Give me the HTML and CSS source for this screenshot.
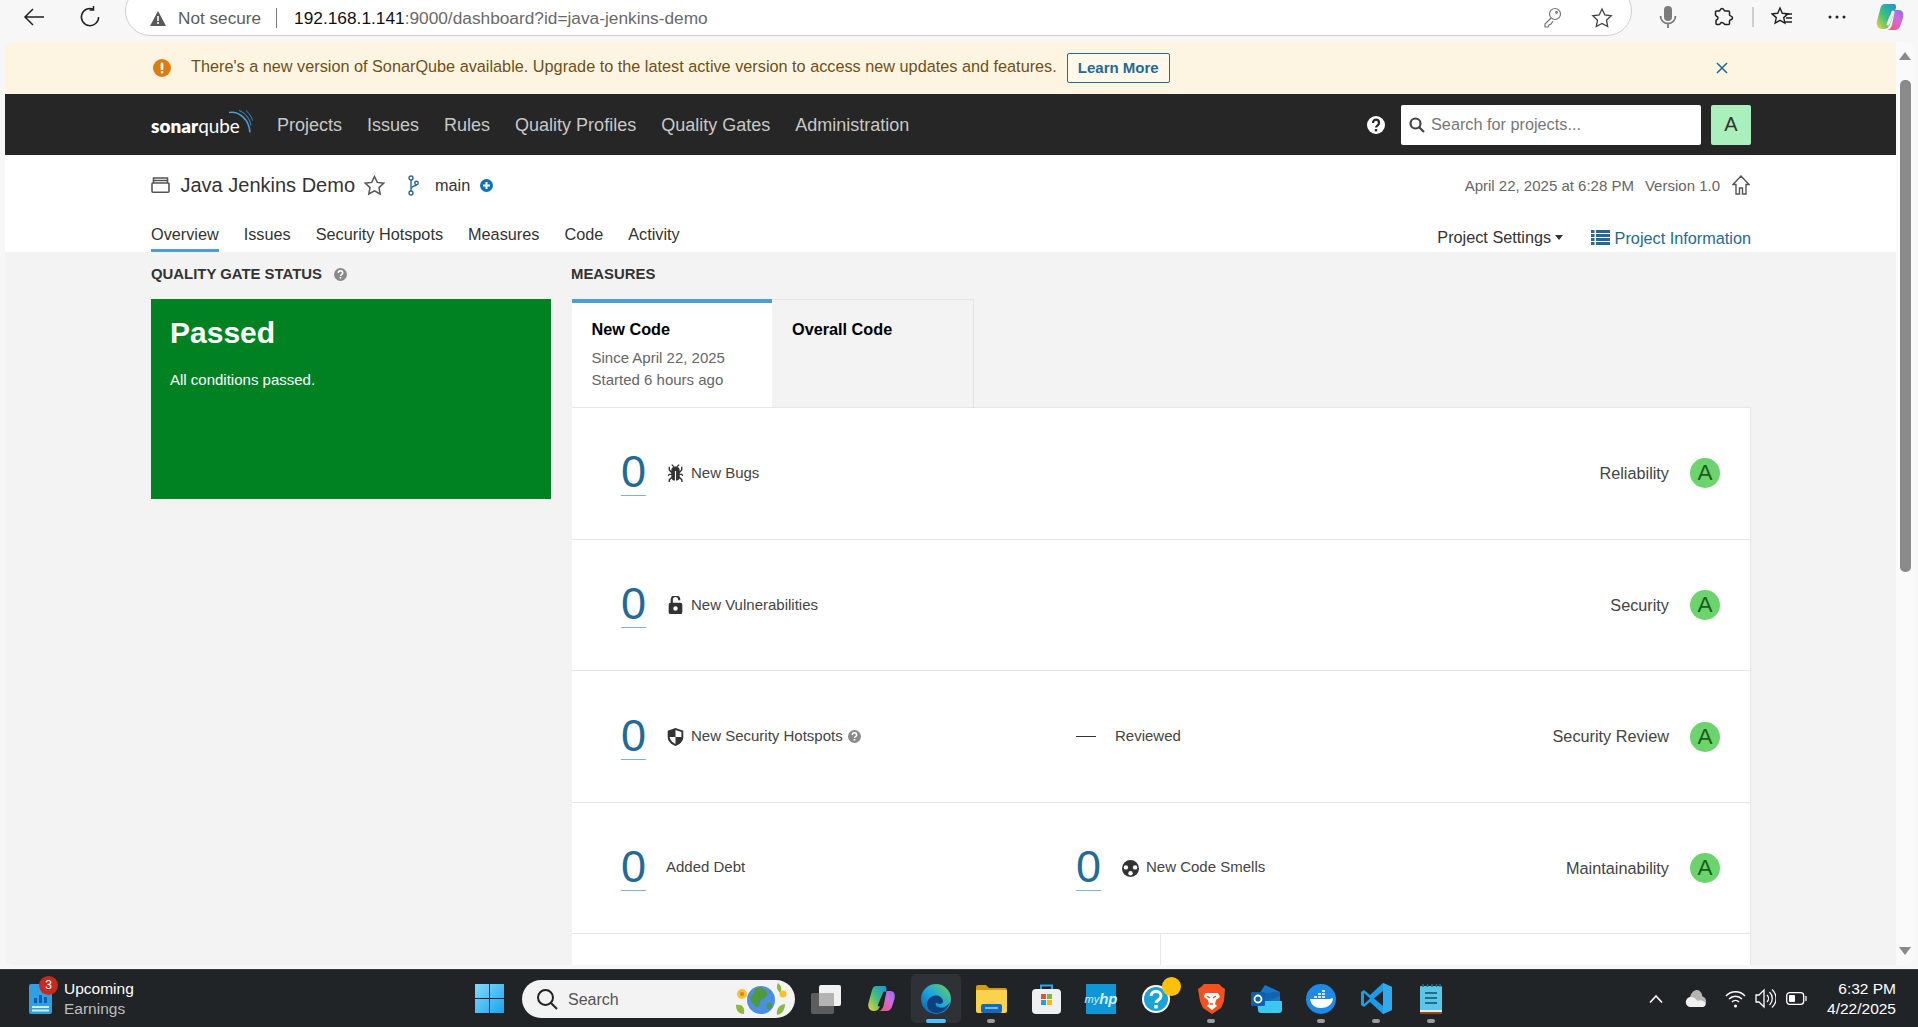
FILE: index.html
```html
<!DOCTYPE html>
<html lang="en">
<head>
<meta charset="utf-8">
<title>Java Jenkins Demo - SonarQube</title>
<link rel="stylesheet" href="styles.css">
</head>
<body>
<div class="screen">
  <header class="toolbar">
    <div class="tb-btn tb-first"><svg width="22" height="22" viewBox="0 0 22 22" fill="none" stroke="#222" stroke-width="1.5"><path d="M21 11H2M10 3l-8 8 8 8"/></svg></div>
    <div class="tb-btn"><svg width="22" height="22" viewBox="0 0 22 22" fill="none" stroke="#222" stroke-width="1.5"><path d="M14.5 3.2A8.6 8.6 0 1 0 19.6 11"/><path d="M14.5 0v4h-4"/></svg></div>
    <div class="addr">
      <svg class="warn-tri" width="16" height="15" viewBox="0 0 16 15"><path d="M8 0l8 15H0z" fill="#5a5a5a"/><path d="M7.2 5h1.6v5H7.2zM7.2 11h1.6v2H7.2z" fill="#fff"/></svg>
      <span class="not-secure">Not secure</span>
      <span class="addr-sep"></span>
      <span class="url"><b>192.168.1.141</b>:9000/dashboard?id=java-jenkins-demo</span>
      <svg class="addr-key" width="20" height="22" viewBox="0 0 20 22" fill="none" stroke="#777" stroke-width="1.2"><circle cx="13" cy="7" r="5.5"/><path d="M9 11l-6 6v3h3l1-2 2-1 2-3"/><circle cx="14.5" cy="5.5" r=".8"/></svg>
      <svg class="addr-star" width="22" height="22" viewBox="0 0 22 22" fill="none" stroke="#444" stroke-width="1.3"><path d="M11 2l2.8 6 6.4.8-4.7 4.4 1.2 6.4L11 16.400l-5.700 3.200 1.200-6.400L1.800 8.800 8.200 8z"/></svg>
    </div>
    <div class="tb-btn tb-mic"><svg width="18" height="24" viewBox="0 0 18 24" fill="none"><rect x="5" y="1" width="8" height="15" rx="4" fill="#7b7b7b"/><path d="M1.500 11a7.500 7.500 0 0 0 15 0M9 18.500V23" stroke="#7b7b7b" stroke-width="1.800"/></svg></div>
    <div class="tb-btn"><svg width="20" height="20" viewBox="0 0 20 20" fill="none" stroke="#222" stroke-width="1.500"><path d="M8 1.500c2 0 2 2.500 3 2.500h3.500a1 1 0 0 1 1 1V8c0 1 3 1 3 3s-3 1.500-3 3v2.500a1 1 0 0 1-1 1H11c-1 0-1-2-3-2s-1.500 2-3 2H3a1 1 0 0 1-1-1V14c0-1.500 2-1 2-3s-2.500-1.500-2.500-3V5a1 1 0 0 1 1-1H5c1.500 0 1-2.500 3-2.500z"/></svg></div>
    <span class="tb-sep"></span>
    <div class="tb-btn"><svg width="22" height="22" viewBox="0 0 22 22" fill="none" stroke="#222" stroke-width="1.400"><path d="M9 2l2.300 5.300 5.700.6-4.300 3.700 1.200 5.600L9 14.400 4.100 17.200l1.200-5.600L1 7.900l5.700-.6z"/><path d="M14 8h7M15 12h6M14 16h7"/></svg></div>
    <div class="tb-btn tb-more"><svg width="18" height="4" viewBox="0 0 18 4" fill="#222"><circle cx="2" cy="2" r="1.500"/><circle cx="9" cy="2" r="1.500"/><circle cx="16" cy="2" r="1.500"/></svg></div>
    <div class="tb-btn tb-copilot"><svg width="28" height="28" viewBox="0 0 28 28"><defs><linearGradient id="cp1" x1="0" y1="1" x2="1" y2="0"><stop offset="0" stop-color="#f7d038"/><stop offset=".45" stop-color="#39c37c"/><stop offset="1" stop-color="#1d8fe8"/></linearGradient><linearGradient id="cp2" x1="0" y1="1" x2="1" y2="0"><stop offset="0" stop-color="#f0556a"/><stop offset=".6" stop-color="#d06be0"/><stop offset="1" stop-color="#8f6bef"/></linearGradient></defs><path d="M9 1h9c2 0 2 2 2 4l-6 16c-1 3-3 5-6 5H6c-4 0-6-4-5-8L4 7C5 3 6 1 9 1z" fill="url(#cp1)"/><path d="M19 7h4c4 0 5 4 4 8l-2 6c-1 4-3 6-6 6h-8c2 0 4-2 5-5z" fill="url(#cp2)"/><path d="M17 9l-5 12" stroke="#f7f7f7" stroke-width="3" stroke-linecap="round"/></svg></div>
  </header>

  <div class="window">
    <main class="page">
      <section class="banner">
        <svg class="banner-ico" width="18" height="18" viewBox="0 0 18 18"><circle cx="9" cy="9" r="9" fill="#e07b10"/><rect x="7.700" y="3.500" width="2.600" height="7.500" rx="1" fill="#fff"/><rect x="7.700" y="12" width="2.600" height="2.600" rx="1" fill="#fff"/></svg>
        <span class="banner-text">There's a new version of SonarQube available. Upgrade to the latest active version to access new updates and features.</span>
        <a class="learn">Learn More</a>
        <svg class="banner-x" width="12" height="12" viewBox="0 0 12 12" fill="none" stroke="#236a97" stroke-width="1.600"><path d="M1 1l10 10M11 1L1 11"/></svg>
      </section>

      <nav class="nav">
        <div class="logo">
          <span class="logo-text"><b>sonar</b>qube</span>
          <svg class="logo-arc" width="24" height="24" viewBox="0 0 24 24" fill="none"><path d="M0 2.500C10 1 20 9 21 22.500" stroke="#4b9fd5" stroke-width="1.600"/><path d="M10 .5c7 2.500 11 9 12 15" stroke="#4b9fd5" stroke-width=".9"/><path d="M17 .5c3 2.500 5.500 6 6.500 10" stroke="#4b9fd5" stroke-width=".8"/></svg>
        </div>
        <a class="nav-link">Projects</a>
        <a class="nav-link">Issues</a>
        <a class="nav-link">Rules</a>
        <a class="nav-link">Quality Profiles</a>
        <a class="nav-link">Quality Gates</a>
        <a class="nav-link">Administration</a>
        <svg class="nav-help" width="18" height="18" viewBox="0 0 18 18"><circle cx="9" cy="9" r="9" fill="#fff"/><path d="M6 7c0-4.500 6-4.500 6 0 0 2.500-3 2.500-3 4.500" fill="none" stroke="#262626" stroke-width="2.200"/><rect x="7.800" y="13" width="2.400" height="2.400" fill="#262626"/></svg>
        <div class="search">
          <svg width="16" height="16" viewBox="0 0 16 16" fill="none" stroke="#444" stroke-width="2.200"><circle cx="6.500" cy="6.500" r="5"/><path d="M10 10l5 5"/></svg>
          <span>Search for projects...</span>
        </div>
        <div class="avatar">A</div>
      </nav>

      <section class="project">
        <div class="project-top">
          <svg class="qual-ico" width="19" height="16" viewBox="0 0 19 16" fill="none" stroke="#555" stroke-width="1.600"><rect x="1" y="6" width="17" height="9.200" rx="1"/><path d="M2.500 6V1h14v5M2.500 3.500h14"/></svg>
          <span class="project-name">Java Jenkins Demo</span>
          <svg class="project-star" width="21" height="21" viewBox="0 0 21 21" fill="none" stroke="#555" stroke-width="1.500"><path d="M10.500 1.500l2.800 5.900 6.400.8-4.700 4.400 1.200 6.400-5.700-3.100-5.700 3.100 1.200-6.400L1.300 8.200l6.400-.8z"/></svg>
          <svg class="branch-ico" width="11" height="21" viewBox="0 0 11 21" fill="none" stroke="#236a97" stroke-width="1.400"><circle cx="3" cy="3" r="2"/><circle cx="3" cy="18" r="2"/><circle cx="8.500" cy="8" r="1.700"/><path d="M3 5v11M3 14c0-3 5-2.500 5.500-4.500"/></svg>
          <span class="branch-name">main</span>
          <svg class="branch-plus" width="13" height="13" viewBox="0 0 13 13"><circle cx="6.500" cy="6.500" r="6.500" fill="#0f72b8"/><path d="M6.500 3v7M3 6.500h7" stroke="#fff" stroke-width="2"/></svg>
          <span class="analysis">April 22, 2025 at 6:28 PM</span>
          <span class="version">Version 1.0</span>
          <svg class="home-ico" width="18" height="20" viewBox="0 0 18 20" fill="none" stroke="#555" stroke-width="1.400"><path d="M9 1L1 9.500h3V19h3.500v-6h3v6H14V9.500h3z"/></svg>
        </div>
        <div class="project-tabs">
          <a class="ptab ptab-on">Overview</a>
          <a class="ptab">Issues</a>
          <a class="ptab">Security Hotspots</a>
          <a class="ptab">Measures</a>
          <a class="ptab">Code</a>
          <a class="ptab">Activity</a>
          <span class="settings">Project Settings</span>
          <span class="caret"></span>
          <svg class="info-ico" width="19" height="15" viewBox="0 0 19 15" fill="#236a97"><path d="M0 0h3.500v3H0zM5 0h14v3H5zM0 4h3.500v3H0zM5 4h14v3H5zM0 8h3.500v3H0zM5 8h14v3H5zM0 12h3.500v3H0zM5 12h14v3H5z"/></svg>
          <span class="info-text">Project Information</span>
        </div>
      </section>

      <div class="content">
        <aside class="gate">
          <h2 class="label">Quality Gate Status
            <svg class="help-ico" width="13" height="13" viewBox="0 0 13 13"><circle cx="6.500" cy="6.500" r="6.500" fill="#8a8a8a"/><path d="M4.300 5c0-3 4.400-3 4.400 0 0 1.700-2.200 1.700-2.200 3" fill="none" stroke="#fff" stroke-width="1.500"/><rect x="5.700" y="9" width="1.600" height="1.600" fill="#fff"/></svg>
          </h2>
          <div class="gate-box">
            <div class="gate-title">Passed</div>
            <div class="gate-msg">All conditions passed.</div>
          </div>
        </aside>
        <section class="measures">
          <h2 class="label">Measures</h2>
          <div class="code-tabs">
            <div class="code-tab code-tab-on">
              <div class="code-title">New Code</div>
              <div class="code-sub code-sub-first">Since April 22, 2025</div>
              <div class="code-sub">Started 6 hours ago</div>
            </div>
            <div class="code-tab">
              <div class="code-title">Overall Code</div>
            </div>
          </div>
          <div class="panel">
            <div class="row row-1">
              <div class="col1">
                <a class="num">0</a>
                <svg class="m-ico" width="17" height="18" viewBox="2.300 1 11.400 13" fill="#333"><path d="M11 9h1.300l.5.8.8-.5-.8-1.300H11v-.3l2-2.300V3h-1v2l-1 1.200V5c-.1-.8-.7-1.500-1.400-1.900L11 1.800l-.7-.7-1.800 1.800a2.500 2.500 0 0 0-1.100 0L5.700 1.100l-.7.7 1.400 1.300C5.700 3.500 5.100 4.200 5 5v1.100L4 5V3H3v2.300l2 2.300V8H3.200l-.8 1.300.8.5.5-.8H5v1.200l-2 2V14h1v-1.300l1.100-1.200c.3.900 1.200 1.500 2.300 1.500h.2V6h.8v7h.2c1.100 0 2-.6 2.400-1.500l1.100 1.200V14h1v-1.800l-2-2z"/></svg>
                <span class="m-label">New Bugs</span>
              </div>
              <span class="r-label">Reliability</span>
              <span class="rating">A</span>
            </div>
            <div class="row row-2">
              <div class="col1">
                <a class="num">0</a>
                <svg class="m-ico" width="17" height="18" viewBox="2.500 1 11 14.500" fill="#333"><path d="M5 7V4a3 3 0 0 1 6 0v.5" fill="none" stroke="#333" stroke-width="1.800"/><path fill-rule="evenodd" d="M4 6.500h8a1.500 1.500 0 0 1 1.500 1.500v6a1.500 1.500 0 0 1-1.500 1.500H4A1.500 1.500 0 0 1 2.500 14V8A1.500 1.500 0 0 1 4 6.500zM8 9.200a1.800 1.800 0 1 0 0 3.600 1.800 1.800 0 0 0 0-3.600z"/></svg>
                <span class="m-label">New Vulnerabilities</span>
              </div>
              <span class="r-label r-label-low">Security</span>
              <span class="rating">A</span>
            </div>
            <div class="row row-3">
              <div class="col1">
                <a class="num">0</a>
                <svg class="m-ico" width="17" height="18" viewBox="1.500 .5 13 15"><path d="M8 .5l6.500 2.200V8c0 3.500-3 6.300-6.500 7.500C4.500 14.300 1.500 11.500 1.500 8V2.700z" fill="#333"/><path d="M8 2.200l4.900 1.600V8H8zM8 8v5.800C5.600 12.800 3.500 10.700 3.100 8z" fill="#fff"/></svg>
                <span class="m-label">New Security Hotspots</span>
                <svg class="help-ico" width="13" height="13" viewBox="0 0 13 13"><circle cx="6.500" cy="6.500" r="6.500" fill="#8a8a8a"/><path d="M4.300 5c0-3 4.400-3 4.400 0 0 1.700-2.200 1.700-2.200 3" fill="none" stroke="#fff" stroke-width="1.500"/><rect x="5.700" y="9" width="1.600" height="1.600" fill="#fff"/></svg>
              </div>
              <div class="col2"><span class="dash"></span><span class="m-label reviewed">Reviewed</span></div>
              <span class="r-label">Security Review</span>
              <span class="rating">A</span>
            </div>
            <div class="row row-4">
              <div class="col1">
                <a class="num">0</a>
                <span class="m-label debt">Added Debt</span>
              </div>
              <div class="col2">
                <a class="num">0</a>
                <svg class="m-ico" width="17" height="17" viewBox="0 0 17 17"><circle cx="8.500" cy="8.500" r="8.500" fill="#333"/><circle cx="3.900" cy="7.400" r="2.200" fill="#fff"/><circle cx="13.100" cy="7.400" r="2.200" fill="#fff"/><circle cx="8.500" cy="13.300" r="2.200" fill="#fff"/><circle cx="8.500" cy="8.800" r="1.600" fill="#333"/></svg>
                <span class="m-label">New Code Smells</span>
              </div>
              <span class="r-label">Maintainability</span>
              <span class="rating">A</span>
            </div>
            <div class="row-split"><div class="split-cell"></div><div class="split-rest"></div></div>
          </div>
        </section>
      </div>
    </main>
    <div class="scrollbar">
      <span class="sb-up"></span>
      <span class="sb-thumb"></span>
      <span class="sb-down"></span>
    </div>
  </div>

  <footer class="taskbar">
    <div class="widget">
      <div class="widget-ico">
        <svg width="23" height="30" viewBox="0 0 23 30"><rect width="23" height="30" rx="2" fill="#2f9fe6"/><path d="M5 14h3v5H5zM10 11h3v8h-3zM15 13h3v6h-3z" fill="#0c5fa8"/><path d="M3 22h17v2H3zM3 25.500h17v2H3z" fill="#d3ecfb"/></svg>
        <span class="badge">3</span>
      </div>
      <div class="widget-text"><div>Upcoming</div><div class="muted">Earnings</div></div>
    </div>
    <svg class="win" width="29" height="29" viewBox="0 0 29 29"><defs><linearGradient id="w1" x1="0" y1="0" x2="1" y2="1"><stop offset="0" stop-color="#7fdcfa"/><stop offset="1" stop-color="#1aa3ef"/></linearGradient></defs><path d="M0 0h14v14H0zM15 0h14v14H15zM0 15h14v14H0zM15 15h14v14H15z" fill="url(#w1)"/></svg>
    <div class="pill">
      <svg width="22" height="22" viewBox="0 0 22 22" fill="none" stroke="#222" stroke-width="2"><circle cx="9.500" cy="9.500" r="7.500"/><path d="M15 15l6 6"/></svg>
      <span class="pill-text">Search</span>
      <svg class="pill-globe" width="58" height="36" viewBox="0 0 58 36"><circle cx="10" cy="13" r="5" fill="#f5c32c"/><circle cx="10" cy="13" r="2" fill="#d9822b"/><path d="M4 24c6-1 9 2 8 9-5 0-8-3-8-9z" fill="#8fb93d"/><circle cx="29" cy="19" r="14" fill="#4a8fe0"/><path d="M24 7c6-2 12 2 11 7-1 4-6 2-7 7s-3 7-6 3-5-7-2-10 3-6 4-7zM36 22c3-1 5 0 4 3s-4 4-5 2 0-4 1-5z" fill="#4f9a3a"/><path d="M46 2c4 3 4 7 2 10-3-3-4-6-2-10z" fill="#8fb93d"/><circle cx="51" cy="13" r="3.500" fill="#f5c32c"/><path d="M45 34c-1-6 2-10 8-11 0 6-3 10-8 11z" fill="#8fb93d"/></svg>
    </div>
    <div class="task">
      <span class="task-btn"><svg width="30" height="30" viewBox="0 0 30 30"><rect x="0" y="9" width="23" height="21" rx="2" fill="#5d5d5d"/><rect x="8" y="1" width="22" height="21" rx="2" fill="#f1f1f1"/><rect x="8" y="9" width="15" height="13" fill="#b4b4b4"/></svg></span>
      <span class="task-btn"><svg width="29" height="27" viewBox="0 0 28 27"><defs><linearGradient id="tc1" x1="0" y1="1" x2="1" y2="0"><stop offset="0" stop-color="#f7d038"/><stop offset=".5" stop-color="#3bbf7c"/><stop offset="1" stop-color="#1d8fe8"/></linearGradient><linearGradient id="tc2" x1="0" y1="1" x2="1" y2="0"><stop offset="0" stop-color="#f0556a"/><stop offset=".6" stop-color="#d06be0"/><stop offset="1" stop-color="#8f6bef"/></linearGradient></defs><path d="M9 1h8c2 0 2 2 2 4l-6 15c-1 3-3 6-6 6H6c-4 0-6-4-5-8L4 7C5 3 6 1 9 1z" fill="url(#tc1)"/><path d="M19 6h4c4 0 5 4 4 8l-2 6c-1 4-3 6-6 6h-8c2 0 4-2 5-5z" fill="url(#tc2)"/><path d="M17 8l-5 12" stroke="#212427" stroke-width="3" stroke-linecap="round"/></svg></span>
      <span class="task-btn task-active"><svg width="30" height="30" viewBox="0 0 30 30"><defs><linearGradient id="e1" x1="0" y1="1" x2="1" y2="0"><stop offset="0" stop-color="#0c59a4"/><stop offset=".5" stop-color="#1ba6de"/><stop offset="1" stop-color="#6fd24d"/></linearGradient></defs><circle cx="15" cy="15" r="15" fill="url(#e1)"/><path d="M11 28C5 25 4 17 10 13c5-3 11-1 12 4 .6 3-4 4-6 2-2-1-2 3 1 4 4 2 9 0 12-5-2 8-10 13-18 10z" fill="#0f3f7f"/></svg><i class="dot dot-on"></i></span>
      <span class="task-btn"><svg width="31" height="28" viewBox="0 0 31 28"><path d="M0 2a2 2 0 0 1 2-2h8l3 3h16a2 2 0 0 1 2 2v5H0z" fill="#d39a12"/><path d="M0 5h31v21a2 2 0 0 1-2 2H2a2 2 0 0 1-2-2z" fill="#fbd24e"/><rect x="5" y="19" width="21" height="9" rx="2" fill="#0f6cbd"/><path d="M9 23h13" stroke="#a8d4f5" stroke-width="1.400"/></svg><i class="dot"></i></span>
      <span class="task-btn"><svg width="29" height="30" viewBox="0 0 29 30"><path d="M9 5V1.500h11V5" fill="none" stroke="#2aa5e0" stroke-width="2"/><rect y="5" width="29" height="25" rx="4" fill="#f0f0f0"/><path d="M9 10h5v5H9z" fill="#e6532d"/><path d="M15 10h5v5h-5z" fill="#7dba2f"/><path d="M9 16h5v5H9z" fill="#1ba1e2"/><path d="M15 16h5v5h-5z" fill="#fbb900"/></svg></span>
      <span class="task-btn"><span class="myhp">my<em>hp</em></span></span>
      <span class="task-btn task-help"><svg width="31" height="31" viewBox="0 0 31 31"><circle cx="15" cy="16" r="14" fill="#fff"/><circle cx="15" cy="16" r="12" fill="#1ba3d8"/><path d="M10 13c0-6 10-6 10 0 0 4-5 4-5 7" fill="none" stroke="#fff" stroke-width="3"/><rect x="13.300" y="22" width="3.400" height="3.400" fill="#fff"/></svg><i class="help-dot"></i></span>
      <span class="task-btn"><svg width="27" height="30" viewBox="0 0 27 30"><path d="M6 0h15l3 3 3 2-1 12-3 7-9 6-9-6-3-7L0 5l3-2z" fill="#f4511e"/><path d="M7 9h13l2 4-4 3-1 4 2 2-5 4-5-4 2-2-1-4-4-3z" fill="#fff"/><path d="M9 12l3 2M18 12l-3 2M12 20h3" stroke="#f4511e" stroke-width="1.500"/></svg><i class="dot"></i></span>
      <span class="task-btn"><svg width="31" height="28" viewBox="0 0 31 28"><path d="M14 0l15 7v14a3 3 0 0 1-3 3H8V9z" fill="#1477c9"/><path d="M11 8l18-1v4l-18 7z" fill="#0f5ea8" opacity=".7"/><path d="M6 16h25v9a3 3 0 0 1-3 3H10a3 3 0 0 1-3-3z" fill="#3cc7f0"/><rect y="7" width="14" height="14" rx="1.500" fill="#0a5fb0"/><circle cx="7" cy="14" r="3.500" fill="none" stroke="#fff" stroke-width="1.800"/></svg></span>
      <span class="task-btn"><svg width="30" height="30" viewBox="0 0 30 30"><circle cx="15" cy="15" r="15" fill="#1d8ae8"/><path d="M4 15h20c1-1 3-1 3 0-1 6-6 9-12 9-6 0-10-3-11-9z" fill="#fff"/><path d="M8 12h3v2H8zM12 12h3v2h-3zM16 12h3v2h-3zM12 9h3v2h-3zM16 9h3v2h-3zM16 6h3v2h-3z" fill="#cfe6fa"/></svg><i class="dot"></i></span>
      <span class="task-btn"><svg width="31" height="31" viewBox="0 0 31 31"><path d="M22 0l9 4v23l-9 4L9 19l-6 5-3-2v-13l3-2 6 5z" fill="#1c9be6"/><path d="M22 0v31l9-4V4z" fill="#2eaaf0"/><path d="M22 8l-9 7.500 9 7.500z" fill="#222528"/><path d="M3 10l6 5.500-6 5.500z" fill="#222528"/></svg><i class="dot"></i></span>
      <span class="task-btn"><svg width="22" height="30" viewBox="0 0 22 30"><rect y="2" width="22" height="28" rx="1" fill="#5cc6e8"/><path d="M0 26h22v2H0z" fill="#f2e7d5"/><path d="M0 28h22v2H0z" fill="#8b4d1f"/><path d="M5 9h12M5 14h12M5 19h12" stroke="#1f6e8c" stroke-width="2"/><path d="M3 0v3M7.500 0v3M12 0v3M16.500 0v3M20 0v3" stroke="#1f6e8c" stroke-width="1.500"/></svg><i class="dot"></i></span>
    </div>
    <div class="tray">
      <span class="tray-i tray-40"><svg width="14" height="8" viewBox="0 0 14 8" fill="none" stroke="#fff" stroke-width="1.600"><path d="M1 7.500L7 1l6 6.500"/></svg></span>
      <span class="tray-i tray-cloud"><svg width="22" height="20" viewBox="0 0 22 20"><path d="M6 18a5 5 0 0 1-1-9.800C6 3 9.500 1 12 1c3 0 5 3 5.500 6.500A5.500 5.500 0 0 1 17 18z" fill="#b4b4b4"/><path d="M6 18a5 5 0 0 1-.5-10c3 0 5 1.500 7 4 3-1.500 7-.5 8 3 .3 1.500-1 3-3 3z" fill="#f0f0f0"/></svg></span>
      <span class="tray-i tray-30"><svg width="21" height="21" viewBox="0 0 21 21" fill="none" stroke="#fff" stroke-width="1.500"><path d="M1 8a13 13 0 0 1 19 0M4 11a9 9 0 0 1 13 0M7 14a5 5 0 0 1 7 0"/><circle cx="10.500" cy="18" r="1.500" fill="#fff" stroke="none"/></svg></span>
      <span class="tray-i tray-30"><svg width="21" height="21" viewBox="0 0 21 21" fill="none" stroke="#fff" stroke-width="1.300"><path d="M1 7h3l5-5v17l-5-5H1zM12 7a5 5 0 0 1 0 7M14.500 4a9 9 0 0 1 0 13M17 1.500a12 12 0 0 1 0 18"/></svg></span>
      <span class="tray-i tray-bat"><svg width="21" height="13" viewBox="0 0 21 13" fill="none" stroke="#fff" stroke-width="1.300"><rect x=".7" y=".7" width="17" height="11.600" rx="3"/><rect x="3" y="3" width="6" height="7" rx="1" fill="#fff" stroke="none"/><path d="M20 4v5"/></svg></span>
      <div class="clock"><div>6:32 PM</div><div>4/22/2025</div></div>
    </div>
  </footer>
</div>
</body>
</html>
```
FILE: styles.css
```css
* { box-sizing: border-box; }
html, body { margin: 0; padding: 0; height: 100%; overflow: hidden; }
body { font-family: "Liberation Sans", Arial, sans-serif; color: #333; background: #f7f7f7; }
a { color: inherit; text-decoration: none; }
svg { display: block; flex: none; }
.screen { width: 1918px; height: 1027px; display: flex; flex-direction: column; overflow: hidden; }

/* browser toolbar */
.toolbar { height: 42px; flex: none; display: flex; align-items: flex-start; overflow: hidden; background: #f7f7f7; padding-left: 6px; }
.tb-btn { width: 56px; height: 34px; flex: none; display: flex; align-items: center; justify-content: center; }
.addr { width: 1507px; height: 50px; margin: -14px 0 0 7px; background: #fff; border: 1px solid #cfcfcf; border-radius: 25px; flex: none; display: flex; align-items: center; padding: 14px 18px 0 24px; }
.not-secure { font-size: 17.200px; color: #5c5c5c; margin-left: 12px; }
.addr-sep { width: 1px; height: 20px; background: #777; margin: 0 17px 0 15px; }
.url { font-size: 17.300px; color: #6a6a6a; white-space: nowrap; }
.url b { font-weight: 400; color: #111; }
.addr-key { margin-left: auto; }
.addr-star { margin-left: 29px; }
.tb-mic { margin-left: 8px; }
.tb-sep { width: 2px; height: 20px; background: #cfcfcf; margin: 7px 0 0; flex: none; }
.tb-more { width: 54px; }
.tb-copilot { width: 52px; }

/* window */
.window { height: 923px; flex: none; margin: 0 4px 0 5px; display: flex; overflow: hidden; border-radius: 8px; background: #fafafa; }
.page { width: 1891px; flex: none; display: flex; flex-direction: column; background: #f3f3f3; overflow: hidden; }
.scrollbar { flex: 1; display: flex; flex-direction: column; align-items: center; padding-top: 10px; background: #fafafa; }
.sb-up { width: 0; height: 0; border-left: 6px solid transparent; border-right: 6px solid transparent; border-bottom: 8px solid #8a8a8a; }
.sb-thumb { width: 11px; height: 492px; margin-top: 20px; border-radius: 5px; background: #8a8a8a; }
.sb-down { width: 0; height: 0; margin-top: auto; margin-bottom: 10px; border-left: 6px solid transparent; border-right: 6px solid transparent; border-top: 8px solid #8a8a8a; }

/* banner */
.banner { height: 52px; flex: none; display: flex; align-items: center; background: #fdf5e2; padding-left: 148px; }
.banner-text { font-size: 16.250px; color: #6f5018; margin-left: 20px; margin-top: -3px; white-space: nowrap; }
.learn { width: 103px; height: 30px; margin-left: 10px; margin-top: -1px; border: 1px solid #236a97; border-radius: 2px; background: #fff9ec; color: #236a97; font-size: 15px; font-weight: 700; display: flex; align-items: center; justify-content: center; }
.banner-x { margin-left: 546px; }

/* nav */
.nav { height: 61px; flex: none; display: flex; align-items: center; background: #262626; padding: 0 145px 0 146px; }
.logo { display: flex; align-items: flex-start; width: 102px; height: 26px; margin-right: 24px; }
.logo-text { font-family: Lato, "Open Sans", sans-serif; font-size: 18.900px; line-height: 28px; color: #fff; }
.logo-text b { font-weight: 800; }
.logo-arc { margin-left: -11px; margin-top: -2px; }
.nav-link { font-size: 18px; color: #c8c8c8; margin-right: 25px; white-space: nowrap; padding-top: 2px; }
.nav-help { margin-left: auto; margin-right: 16px; }
.search { width: 300px; height: 40px; background: #fff; border-radius: 2px; display: flex; align-items: center; padding-left: 8px; gap: 6px; color: #777; font-size: 16.250px; margin-right: 10px; }
.avatar { width: 40px; height: 40px; background: #aaf0bd; border-radius: 2px; color: #333; font-size: 20px; display: flex; align-items: center; justify-content: center; }

/* project */
.project { height: 97px; flex: none; background: #fff; padding: 0 145px 0 146px; display: flex; flex-direction: column; justify-content: space-between; }
.project-top { display: flex; align-items: center; height: 60px; padding-right: 1px; }
.project-name { font-size: 20px; margin-left: 10.500px; color: #333; white-space: nowrap; }
.project-star { margin-left: 9px; }
.branch-ico { margin-left: 23px; }
.branch-name { font-size: 16.250px; margin-left: 16px; }
.branch-plus { margin-left: 10px; }
.analysis { font-size: 15px; color: #666; margin-left: auto; }
.version { font-size: 15px; color: #666; margin-left: 11px; }
.home-ico { margin-left: 12px; }
.project-tabs { display: flex; align-items: flex-end; height: 37px; }
.ptab { font-size: 16.250px; line-height: 19px; height: 27px; margin-right: 25px; white-space: nowrap; }
.ptab-on { border-bottom: 3px solid #4b9fd5; }
.settings { font-size: 16.250px; margin-left: auto; height: 24.500px; }
.caret { width: 0; height: 0; margin: 0 0 12.500px 4px; border-left: 4.500px solid transparent; border-right: 4.500px solid transparent; border-top: 5px solid #333; }
.info-ico { margin: 0 5px 7px 27.500px; }
.info-text { font-size: 16.250px; color: #236a97; height: 23px; }

/* content */
.content { flex: 1; display: flex; gap: 20px; padding: 0 145px 0 146px; min-height: 0; }
.gate { width: 400px; flex: none; }
.label { margin: 13px 0 0; height: 18px; display: flex; align-items: center; gap: 7px; font-size: 14.900px; line-height: 18px; font-weight: 700; text-transform: uppercase; color: #333; }
.gate-box { height: 200px; margin-top: 16px; padding: 16px 19px; background: #008223; color: #fff; }
.gate-title { font-size: 30px; line-height: 36px; font-weight: 700; }
.gate-msg { font-size: 15px; line-height: 22px; margin-top: 18px; }
.measures { flex: 1; min-width: 0; }
.code-tabs { display: flex; height: 108px; margin: 16px 0 0 1px; }
.code-tab { width: 202px; border: 1px solid #e6e6e6; border-bottom: 0; border-left: 0; padding: 18px 20px 0; background: #f3f3f3; }
.code-tab-on { width: 200px; background: #fff; border: 0; border-top: 4px solid #4b9fd5; padding: 15px 19.500px 0; }
.code-title { font-size: 16.250px; line-height: 22px; font-weight: 700; color: #000; }
.code-sub { font-size: 15px; line-height: 22px; color: #666; }
.code-sub-first { margin-top: 7px; }
.panel { background: #fff; border-style: solid; border-color: #e6e6e6; border-width: 1px 1px 0 0; height: 600px; margin-left: 1px; }
.row { display: flex; align-items: center; padding: 0 30px 0 49px; border-bottom: 1px solid #e6e6e6; }
.row-1 { height: 131.500px; }
.row-2 { height: 131.500px; }
.row-3 { height: 132px; }
.row-4 { height: 131px; }
.col1 { width: 455px; flex: none; display: flex; align-items: center; }
.col2 { display: flex; align-items: center; }
.num { display: block; width: 25px; height: 46px; font-size: 45px; line-height: 44px; color: #236a97; border-bottom: 1px solid #7fb2d0; flex: none; }
.m-ico { margin-left: 21px; }
.m-label { font-size: 15px; color: #444; margin-left: 7px; white-space: nowrap; margin-top: -1px; }
.debt { margin-left: 20px; }
.reviewed { margin-left: 19px; }
.row-3 .m-label, .row-4 .m-label { margin-top: -3px; }
.help-ico { margin-left: 5px; }
.dash { width: 20px; height: 1px; background: #333; }
.r-label { margin-left: auto; font-size: 16.250px; color: #444; }
.r-label-low { padding-top: 1px; }
.rating { width: 30px; height: 30px; margin-left: 21px; border-radius: 50%; background: #6cd46c; color: #1a5c1a; font-size: 22.500px; display: flex; align-items: center; justify-content: center; }
.row-split { display: flex; height: 200px; }
.split-cell { width: 589px; border-right: 1px solid #e6e6e6; }
.split-rest { flex: 1; }

/* taskbar */
.taskbar { height: 58px; margin-top: 4px; flex: none; display: flex; align-items: center; background: #212427; border-top: 1px solid #3a3a3a; }
.widget { width: 475px; flex: none; display: flex; align-items: center; padding-left: 29px; gap: 12px; }
.widget-ico { position: relative; }
.badge { position: absolute; left: 10px; top: -8px; width: 19px; height: 19px; border-radius: 50%; background: #c42b1c; color: #fff; font-size: 12px; display: flex; align-items: center; justify-content: center; }
.widget-text { font-size: 15.500px; line-height: 20px; color: #fff; }
.muted { color: #bdbdbd; }
.pill { width: 273px; height: 38px; margin-left: 18px; border-radius: 19px; background: #f3f3f3; display: flex; align-items: center; padding: 0 5px 0 14px; flex: none; }
.pill-text { font-size: 16px; color: #555; margin-left: 10px; padding-top: 2px; }
.pill-globe { margin-left: auto; }
.task { display: flex; margin-left: 3.500px; flex: none; }
.task-btn { width: 55px; height: 49px; flex: none; display: flex; align-items: center; justify-content: center; position: relative; }
.task-active { width: 50px; margin: 0 2.500px; background: #2e3236; border-radius: 5px; }
.dot { position: absolute; left: 50%; bottom: 0; width: 8px; height: 4px; margin-left: -4px; border-radius: 2px; background: #9a9a9a; }
.dot-on { width: 20px; margin-left: -10px; background: #4cc2ff; }
.myhp { width: 30px; height: 30px; background: #0f96d6; color: #d6eefa; font-size: 11px; display: flex; align-items: center; justify-content: center; font-style: italic; }
.myhp em { font-size: 15px; font-weight: 700; }
.help-dot { position: absolute; left: 33px; top: 3px; width: 19px; height: 19px; border-radius: 50%; background: #ffc107; }
.tray { flex: 1; display: flex; align-items: center; padding-left: 177px; padding-right: 22px; }
.tray-i { display: flex; align-items: center; justify-content: center; flex: none; }
.tray-40 { width: 40px; }
.tray-cloud { width: 45px; padding-right: 5px; }
.tray-30 { width: 30px; }
.tray-bat { width: 32px; }
.clock { margin-left: auto; text-align: right; font-size: 15.500px; line-height: 20px; color: #fff; }
```
